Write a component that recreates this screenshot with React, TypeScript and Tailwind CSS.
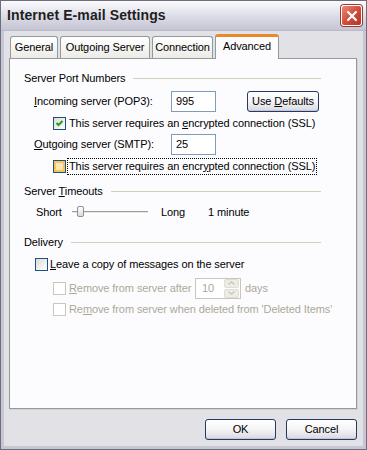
import React from "react";

function Check({
  checked = false,
  hot = false,
  disabled = false,
}: {
  checked?: boolean;
  hot?: boolean;
  disabled?: boolean;
}) {
  const border = disabled ? "border-[#cac8bb]" : "border-[#1c5180]";
  return (
    <span
      className={`relative inline-flex w-[13px] h-[13px] shrink-0 border ${border} ${
        disabled ? "bg-white" : "bg-gradient-to-br from-[#dcdcd7] to-white"
      }`}
    >
      {hot && (
        <span className="absolute inset-0 border-2 border-[#f9c25a] bg-[#fde6b0]" />
      )}
      {checked && (
        <svg viewBox="0 0 11 11" className="absolute inset-0 w-[11px] h-[11px]">
          <path
            d="M2.5 5 L4.5 7 L8.5 3"
            fill="none"
            stroke="#21a121"
            strokeWidth="2"
          />
        </svg>
      )}
    </span>
  );
}

function Group({ title }: { title: React.ReactNode }) {
  return (
    <div className="flex items-center h-[14px] w-[311px] pl-[14px]">
      <span>{title}</span>
      <span className="ml-[8px] flex-1 h-px bg-[#d0d0bf]" />
    </div>
  );
}

function Button({ children, wide = false }: { children: React.ReactNode; wide?: boolean }) {
  return (
    <button
      className={`h-[21px] rounded-[3px] border border-[#243a62] bg-gradient-to-b from-white via-[#f4f4f6] to-[#d8d8e2] shadow-[inset_0_-1px_0_#c6c5d7] flex items-center justify-center ${
        wide ? "w-[72px]" : "w-[71px]"
      }`}
    >
      <span>{children}</span>
    </button>
  );
}

export default function App() {
  return (
    <div
      className="w-[367px] h-[450px] border border-[#6d6d80] bg-[#e2e1e5] text-[11px] leading-[13px] tracking-[-0.1px] text-black flex flex-col overflow-hidden"
      style={{ fontFamily: '"Liberation Sans", Arial, sans-serif' }}
    >
      {/* title bar */}
      <div className="h-[30px] shrink-0 flex items-center justify-between pl-[6px] pr-[4px] bg-gradient-to-b from-[#fbfbfd] via-[#dedee8] to-[#c4c4d3] border-b border-[#b8b8c8]">
        <span className="text-[14px] font-bold text-[#1e1e1e] tracking-[0.1px]">
          Internet E-mail Settings
        </span>
        <span className="w-[21px] h-[21px] rounded-[3px] border border-[#ffffff] bg-gradient-to-br from-[#e88a78] via-[#d34d3a] to-[#b83424] shadow-[0_0_0_1px_#9a3a30] flex items-center justify-center">
          <svg viewBox="0 0 12 12" className="w-[12px] h-[12px]">
            <path d="M2 2 L10 10 M10 2 L2 10" stroke="white" strokeWidth="2.2" strokeLinecap="round" />
          </svg>
        </span>
      </div>

      <div className="flex-1 flex flex-col border-x-[3px] border-b-[3px] border-[#c7c6d3] px-[5px]">
        {/* tabs */}
        <div className="flex items-end h-[27px] pl-[1px] relative z-10">
          <div className="w-[48px] h-[22px] mr-[2px] border border-b-0 border-[#919b9c] rounded-t-[3px] bg-gradient-to-b from-white to-[#ecebe6] flex items-center justify-center">
            General
          </div>
          <div className="w-[90px] h-[22px] mr-[2px] border border-b-0 border-[#919b9c] rounded-t-[3px] bg-gradient-to-b from-white to-[#ecebe6] flex items-center justify-center">
            Outgoing Server
          </div>
          <div className="w-[61px] h-[22px] mr-[2px] border border-b-0 border-[#919b9c] rounded-t-[3px] bg-gradient-to-b from-white to-[#ecebe6] flex items-center justify-center">
            Connection
          </div>
          <div className="w-[64px] h-[25px] -mb-px border border-b-0 border-[#919b9c] border-t-[3px] border-t-[#e68b2c] rounded-t-[3px] bg-[#fcfcfe] flex items-start justify-center pt-[3px]">
            Advanced
          </div>
        </div>

        {/* panel */}
        <div className="w-[348px] h-[351px] border border-[#919b9c] bg-[#fcfcfe] flex flex-col shadow-[1px_1px_0_#d0d0d8]">
          <div className="h-[12px]" />
          <Group title="Server Port Numbers" />

          <div className="mt-[5px] h-[22px] flex items-center pl-[24px]">
            <span className="w-[137px]">
              <u>I</u>ncoming server (POP3):
            </span>
            <span className="w-[45px] h-[21px] border border-[#7f9db9] bg-white flex items-center pl-[4px]">
              995
            </span>
            <span className="ml-[31px]">
              <Button wide>
                Use <u>D</u>efaults
              </Button>
            </span>
          </div>

          <div className="mt-[4px] h-[14px] flex items-center pl-[43px] gap-[3px]">
            <Check checked />
            <span>
              This server requires an <u>e</u>ncrypted connection (SSL)
            </span>
          </div>

          <div className="mt-[3px] h-[22px] flex items-center pl-[24px]">
            <span className="w-[137px]">
              <u>O</u>utgoing server (SMTP):
            </span>
            <span className="w-[45px] h-[21px] border border-[#7f9db9] bg-white flex items-center pl-[4px]">
              25
            </span>
          </div>

          <div className="mt-[2px] h-[18px] flex items-center pl-[43px] gap-[1px]">
            <Check hot />
            <span className="border border-dotted border-black px-[1px] h-[17px] flex items-center">
              <span>
                This server requires an encr<u>y</u>pted connection (SSL)
              </span>
            </span>
          </div>

          <div className="mt-[9px]" />
          <Group
            title={
              <>
                Server <u>T</u>imeouts
              </>
            }
          />

          <div className="mt-[6px] h-[16px] flex items-center pl-[26px]">
            <span className="w-[36px]">Short</span>
            <span className="relative w-[76px] h-[16px] flex items-center">
              <span className="w-full h-[3px] border-t border-[#9d9c99] border-b border-b-white bg-[#e7e6e0]" />
              <span className="absolute left-[5px] top-[2px] w-[7px] h-[11px] rounded-[2px] border border-[#8e8f8f] bg-gradient-to-b from-white to-[#dcdcd8]" />
            </span>
            <span className="ml-[13px] w-[47px]">Long</span>
            <span>1 minute</span>
          </div>

          <div className="mt-[15px]" />
          <Group title="Delivery" />

          <div className="mt-[8px] h-[14px] flex items-center pl-[25px] gap-[2px]">
            <Check />
            <span>
              <u>L</u>eave a copy of messages on the server
            </span>
          </div>

          <div className="mt-[6px] h-[22px] flex items-center pl-[43px] text-[#aca899]">
            <Check disabled />
            <span className="ml-[3px] w-[126px]">
              <u>R</u>emove from server after
            </span>
            <span className="w-[46px] h-[21px] border border-[#c9c7ba] bg-white flex items-center">
              <span className="flex-1 pl-[6px]">10</span>
              <span className="w-[15px] h-[19px] mr-[1px] flex flex-col gap-px">
                <span className="flex-1 rounded-[2px] bg-[#eeede5] border border-[#e0ded3] flex items-center justify-center">
                  <svg viewBox="0 0 7 4" className="w-[7px] h-[4px]">
                    <path d="M0.5 3.5 L3.5 0.8 L6.5 3.5" fill="none" stroke="#c9c7ba" strokeWidth="1.3" />
                  </svg>
                </span>
                <span className="flex-1 rounded-[2px] bg-[#eeede5] border border-[#e0ded3] flex items-center justify-center">
                  <svg viewBox="0 0 7 4" className="w-[7px] h-[4px]">
                    <path d="M0.5 0.5 L3.5 3.2 L6.5 0.5" fill="none" stroke="#c9c7ba" strokeWidth="1.3" />
                  </svg>
                </span>
              </span>
            </span>
            <span className="ml-[4px]">days</span>
          </div>

          <div className="mt-[3px] h-[14px] flex items-center pl-[43px] gap-[3px] text-[#aca899]">
            <Check disabled />
            <span>
              Re<u>m</u>ove from server when deleted from 'Deleted Items'
            </span>
          </div>
        </div>

        {/* footer */}
        <div className="flex justify-end gap-[10px] pt-[10px] w-[348px]">
          <Button>OK</Button>
          <Button>Cancel</Button>
        </div>
      </div>
    </div>
  );
}
